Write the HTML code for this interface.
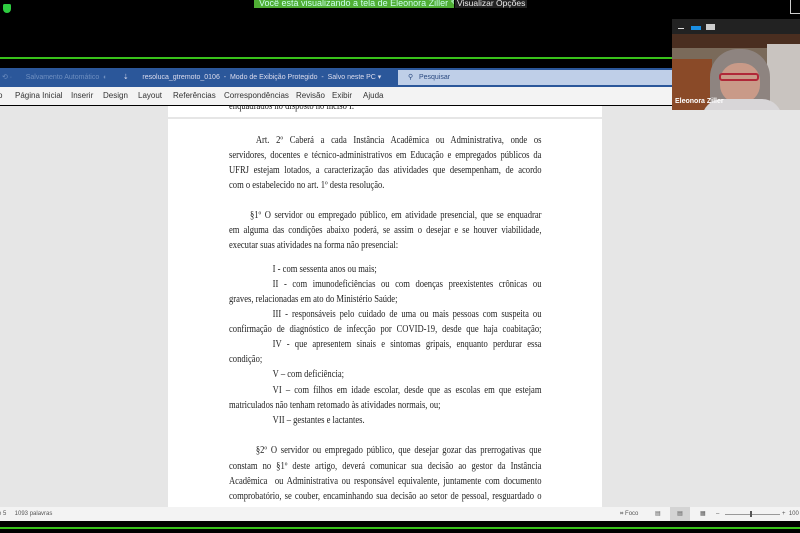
<!DOCTYPE html>
<html><head><meta charset="utf-8"><style>
*{margin:0;padding:0;box-sizing:border-box}
body{width:800px;height:533px;background:#000;position:relative;overflow:hidden;font-family:"Liberation Sans",sans-serif}
.abs{position:absolute}
.p{position:absolute;left:229px;width:372px;transform:scaleX(0.84);transform-origin:0 0;font-family:"Liberation Serif",serif;font-size:10.2px;line-height:12px;height:12px;color:#222;text-align:justify;text-align-last:justify;overflow:visible}
.l{text-align-last:left}
</style></head><body>
<div class="abs" style="left:3px;top:4px;width:8px;height:9px;background:#2ecc40;border-radius:2px 2px 5px 5px"></div>
<div class="abs" style="left:254px;top:0;width:200px;height:8px;background:#4fae34;color:#cfe;font-size:9px;line-height:6px;padding-left:5px;overflow:hidden;white-space:nowrap">Você está visualizando a tela de Eleonora Ziller ✎</div>
<div class="abs" style="left:455px;top:0;width:72px;height:8px;background:#222;color:#eee;font-size:8.5px;line-height:6px;overflow:hidden;padding-left:2px;white-space:nowrap">Visualizar Opções</div>
<div class="abs" style="left:0;top:57px;width:800px;height:2px;background:#38c21a"></div>
<div class="abs" style="left:0;top:106px;width:800px;height:401px;background:#e6e6e6"></div>
<div class="abs" style="left:168px;top:106px;width:434px;height:11px;background:#fff"></div>
<div class="abs" style="left:168px;top:119px;width:434px;height:388px;background:#fff"></div>
<div class="p l" style="top:101px">enquadrados no disposto no inciso I.</div>
<div class="abs" style="left:0;top:68px;width:800px;height:19px;background:#2b579a"></div>
<div class="abs" style="left:0;top:73px;color:#6f8fc0;font-size:7px;white-space:nowrap">&nbsp;⟲ · &nbsp;&nbsp;&nbsp;&nbsp;&nbsp;&nbsp;Salvamento Automático &nbsp;◐&nbsp;&nbsp;&nbsp;&nbsp;&nbsp;&nbsp;&nbsp;&nbsp;<span style="color:#dde">⇣&nbsp;&nbsp;&nbsp;&nbsp;&nbsp;&nbsp; resoluca_gtremoto_0106 &nbsp;-&nbsp; Modo de Exibição Protegido &nbsp;-&nbsp; Salvo neste PC ▾</span></div>
<div class="abs" style="left:398px;top:70px;width:280px;height:15px;background:#bfcfe8;color:#2b4a80;font-size:7px;line-height:15px;padding-left:10px">⚲ &nbsp;&nbsp;Pesquisar</div>
<div class="abs" style="left:0;top:87px;width:800px;height:18px;background:#f3f3f3;font-size:8px;color:#333;line-height:18px;white-space:nowrap">
<span style="position:absolute;left:-2px">o</span><span style="position:absolute;left:15px">Página Inicial</span><span style="position:absolute;left:71px">Inserir</span><span style="position:absolute;left:103px">Design</span><span style="position:absolute;left:138px">Layout</span><span style="position:absolute;left:173px">Referências</span><span style="position:absolute;left:224px">Correspondências</span><span style="position:absolute;left:296px">Revisão</span><span style="position:absolute;left:332px">Exibir</span><span style="position:absolute;left:363px">Ajuda</span></div>
<div class="p" style="top:135px;padding-left:32px">Art. 2º Caberá a cada Instância Acadêmica ou Administrativa, onde os</div>
<div class="p" style="top:150px">servidores, docentes e técnico-administrativos em Educação e empregados públicos da</div>
<div class="p" style="top:165px">UFRJ estejam lotados, a caracterização das atividades que desempenham, de acordo</div>
<div class="p l" style="top:180px">com o estabelecido no art. 1º desta resolução.</div>
<div class="p" style="top:210px;padding-left:25px">§1º O servidor ou empregado público, em atividade presencial, que se enquadrar</div>
<div class="p" style="top:225px">em alguma das condições abaixo poderá, se assim o desejar e se houver viabilidade,</div>
<div class="p l" style="top:240px">executar suas atividades na forma não presencial:</div>
<div class="p l" style="top:264px;padding-left:52px">I - com sessenta anos ou mais;</div>
<div class="p" style="top:279px;padding-left:52px">II - com imunodeficiências ou com doenças preexistentes crônicas ou</div>
<div class="p l" style="top:294px">graves, relacionadas em ato do Ministério Saúde;</div>
<div class="p" style="top:309px;padding-left:52px">III - responsáveis pelo cuidado de uma ou mais pessoas com suspeita ou</div>
<div class="p" style="top:324px">confirmação de diagnóstico de infecção por COVID-19, desde que haja coabitação;</div>
<div class="p" style="top:339px;padding-left:52px">IV - que apresentem sinais e sintomas gripais, enquanto perdurar essa</div>
<div class="p l" style="top:354px">condição;</div>
<div class="p l" style="top:369px;padding-left:52px">V – com deficiência;</div>
<div class="p" style="top:385px;padding-left:52px">VI – com filhos em idade escolar, desde que as escolas em que estejam</div>
<div class="p l" style="top:400px">matriculados não tenham retomado às atividades normais, ou;</div>
<div class="p l" style="top:415px;padding-left:52px">VII – gestantes e lactantes.</div>
<div class="p" style="top:445px;padding-left:32px">§2º O servidor ou empregado público, que desejar gozar das prerrogativas que</div>
<div class="p" style="top:461px">constam no §1º deste artigo, deverá comunicar sua decisão ao gestor da Instância</div>
<div class="p" style="top:476px">Acadêmica &nbsp;ou Administrativa ou responsável equivalente, juntamente com documento</div>
<div class="p" style="top:491px">comprobatório, se couber, encaminhando sua decisão ao setor de pessoal, resguardado o</div>
<div class="abs" style="left:0;top:507px;width:800px;height:14px;background:#f3f3f3;font-size:6px;color:#555;line-height:14px;white-space:nowrap">
<span style="position:absolute;left:-2px">e 5 &nbsp;&nbsp;&nbsp;&nbsp;1093 palavras</span>
<span style="position:absolute;left:620px">⌗ Foco</span>
<span style="position:absolute;left:655px">▤</span>
<span style="position:absolute;left:670px;top:0;width:20px;height:14px;background:#d4d4d4;text-align:center">▤</span>
<span style="position:absolute;left:700px">▦</span>
<span style="position:absolute;left:716px">–</span>
<span style="position:absolute;left:725px;top:7px;width:55px;height:1px;background:#999"></span>
<span style="position:absolute;left:750px;top:4px;width:2px;height:6px;background:#555"></span>
<span style="position:absolute;left:782px">+ &nbsp;100</span></div>
<div class="abs" style="left:0;top:527px;width:800px;height:2px;background:#38c21a"></div>
<div class="abs" style="left:672px;top:19px;width:128px;height:91px;background:#7a6a5a;overflow:hidden">
<div class="abs" style="left:0;top:0;width:128px;height:15px;background:#222"></div>
<div class="abs" style="left:6px;top:9px;width:6px;height:1px;background:#ddd"></div>
<div class="abs" style="left:19px;top:7px;width:10px;height:4px;background:#1a8fe3"></div>
<div class="abs" style="left:34px;top:5px;width:9px;height:6px;background:#ccc"></div>
<div class="abs" style="left:0;top:15px;width:128px;height:14px;background:#4a2e20"></div>
<div class="abs" style="left:0;top:40px;width:40px;height:51px;background:#8a4a28"></div>
<div class="abs" style="left:95px;top:25px;width:33px;height:66px;background:#c9c4c0"></div>
<div class="abs" style="left:38px;top:30px;width:60px;height:70px;background:#8e8480;border-radius:28px 28px 10px 10px"></div>
<div class="abs" style="left:48px;top:44px;width:40px;height:40px;background:#c99a88;border-radius:18px"></div>
<div class="abs" style="left:47px;top:54px;width:40px;height:8px;border:2px solid #b02838;border-radius:3px"></div>
<div class="abs" style="left:30px;top:80px;width:80px;height:20px;background:#d8d6d8;border-radius:20px 20px 0 0"></div>
<div class="abs" style="left:3px;top:79px;color:#fff;font-size:7px;font-weight:bold">Eleonora Ziller</div>
</div>
<div class="abs" style="left:790px;top:0;width:10px;height:14px;border:1px solid #ccc;border-right:none;border-top:none"></div>
</body></html>
